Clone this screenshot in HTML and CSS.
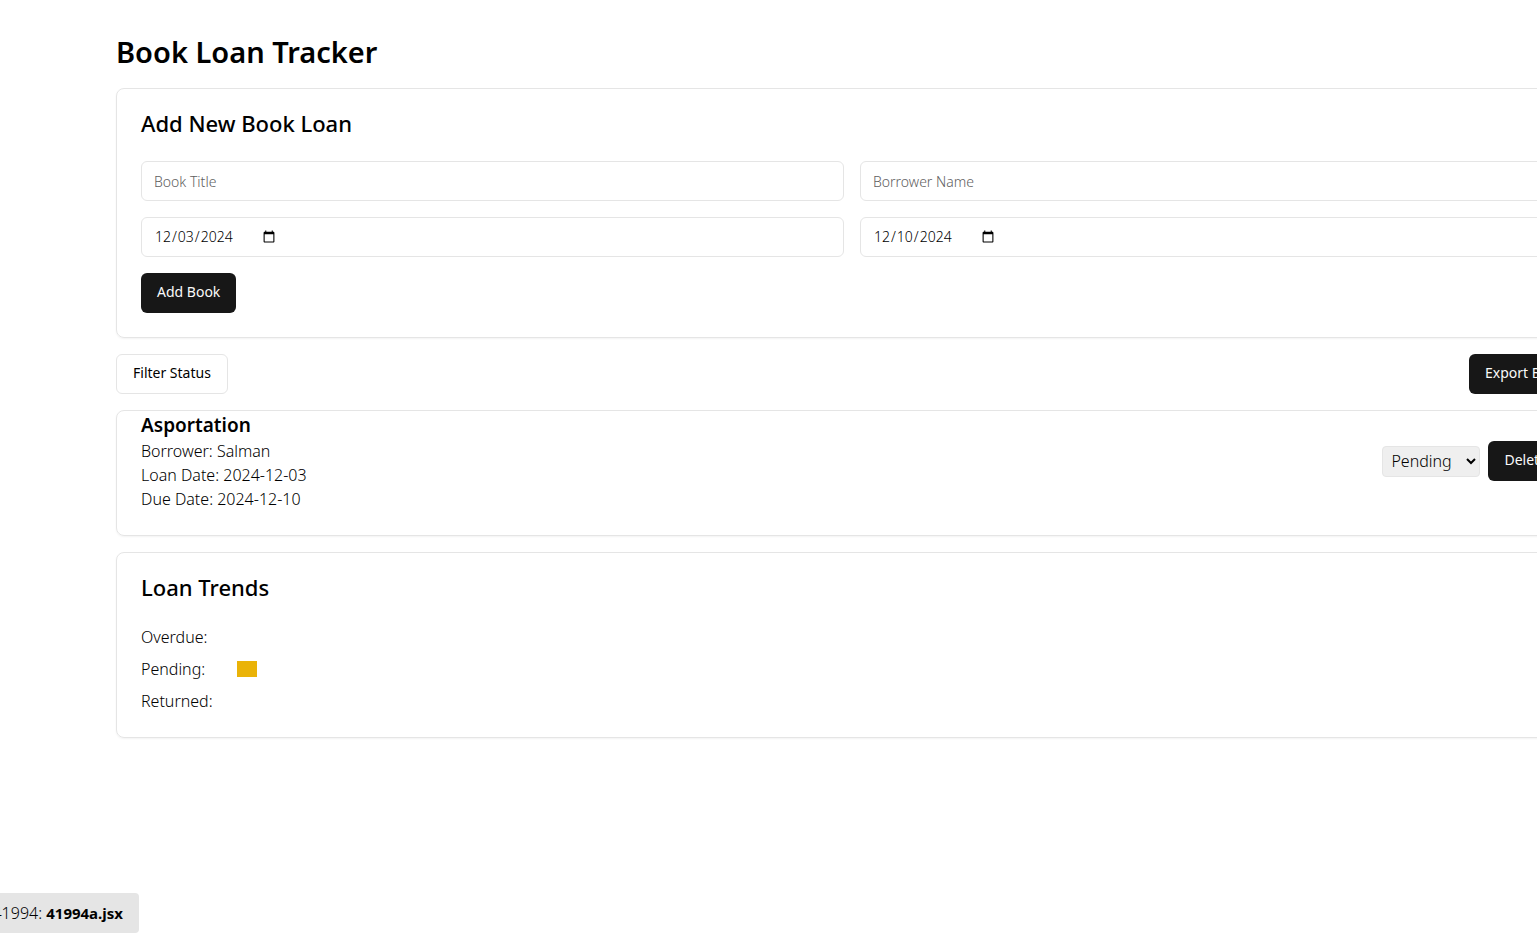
FILE: index.html
```html
<!DOCTYPE html>
<html lang="en-US">
<head>
<meta charset="utf-8">
<title>Book Loan Tracker</title>
<link rel="stylesheet" href="styles.css">
</head>
<body>
<main class="container">
  <h1 class="page-title">Book Loan Tracker</h1>

  <section class="card">
    <h2 class="card-title">Add New Book Loan</h2>
    <form class="form">
      <input class="input" type="text" placeholder="Book Title" aria-label="Book Title">
      <input class="input" type="text" placeholder="Borrower Name" aria-label="Borrower Name">
      <input class="input" type="date" value="2024-12-03" aria-label="Loan Date">
      <input class="input" type="date" value="2024-12-10" aria-label="Due Date">
      <button class="btn btn-primary" type="button">Add Book</button>
    </form>
  </section>

  <div class="toolbar">
    <button class="btn btn-outline" type="button">Filter Status</button>
    <button class="btn btn-primary" type="button">Export Books</button>
  </div>

  <article class="card loan">
    <div class="loan-info">
      <h3 class="loan-title">Asportation</h3>
      <p>Borrower: Salman</p>
      <p>Loan Date: 2024-12-03</p>
      <p>Due Date: 2024-12-10</p>
    </div>
    <div class="loan-actions">
      <select class="select" aria-label="Status">
        <option>Pending</option>
        <option>Returned</option>
        <option>Overdue</option>
      </select>
      <button class="btn btn-primary" type="button">Delete</button>
    </div>
  </article>

  <section class="card">
    <h2 class="card-title">Loan Trends</h2>
    <div class="trends">
      <div class="trend"><span class="trend-label">Overdue:</span></div>
      <div class="trend"><span class="trend-label">Pending:</span><span class="bar" style="width: 20px"></span></div>
      <div class="trend"><span class="trend-label">Returned:</span></div>
    </div>
  </section>
</main>
<div class="file-tag">41994: <strong>41994a.jsx</strong></div>
</body>
</html>
```
FILE: styles.css
```css
*, *::before, *::after { box-sizing: border-box; }
body {
  margin: 0;
  overflow-x: hidden;
  background: #fff;
  color: #000;
  font-family: "Noto Sans", "Open Sans", sans-serif;
  font-size: 16px;
  font-weight: 300;
  line-height: 24px;
}
h1, h2, h3, p { margin: 0; }
button, input, select { font: inherit; color: inherit; }

/* The container runs past the right edge of the window. */
.container {
  margin: 0 -83px 0 84px;
  padding: 32px;
  display: flex;
  flex-direction: column;
  gap: 16px;
}
.page-title { font-size: 29px; line-height: 40px; font-weight: 600; }

.card {
  padding: 24px;
  border: 1px solid #e5e5e5;
  border-radius: 8px;
  box-shadow: 0 1px 2px rgba(0, 0, 0, 0.05);
}
.card-title { margin-bottom: 28px; font-size: 22px; line-height: 20px; font-weight: 500; }

.form { display: grid; grid-template-columns: 1fr 1fr; gap: 16px; }
.input {
  display: flex;
  width: 100%;
  height: 40px;
  padding: 8px 12px;
  border: 1px solid #e5e5e5;
  border-radius: 6px;
  background: #fff;
  font-size: 14px;
  line-height: 20px;
}
.input::placeholder { color: #606060; }

.btn {
  justify-self: start;
  height: 40px;
  padding: 0 16px 2px;
  border: 0;
  border-radius: 6px;
  font-size: 14px;
  line-height: 20px;
  font-weight: 450;
  white-space: nowrap;
}
.btn-primary { background: #171717; color: #fafafa; }
.btn-outline { background: #fff; border: 1px solid #e5e5e5; }

.toolbar { display: flex; justify-content: space-between; }

.loan { display: flex; justify-content: space-between; align-items: center; padding-top: 0; }
.loan-title { font-size: 19px; line-height: 28px; font-weight: 600; }
.loan-actions { display: flex; align-items: center; gap: 8px; }
.select {
  height: 31px;
  padding: 0 4px;
  border: 1px solid #e5e5e5;
  border-radius: 4px;
  background-color: #efefef;
}

.trends { display: flex; flex-direction: column; gap: 8px; }
.trend { display: flex; align-items: center; }
.trend-label { width: 96px; }
.bar { height: 16px; background: #eab308; }

.file-tag {
  position: fixed;
  right: calc(100% - 139px);
  bottom: 14px;
  padding: 8px 16px;
  border-radius: 4px;
  background: #e5e5e5;
  white-space: nowrap;
}
.file-tag strong { font-size: 15px; font-weight: 700; }
```
